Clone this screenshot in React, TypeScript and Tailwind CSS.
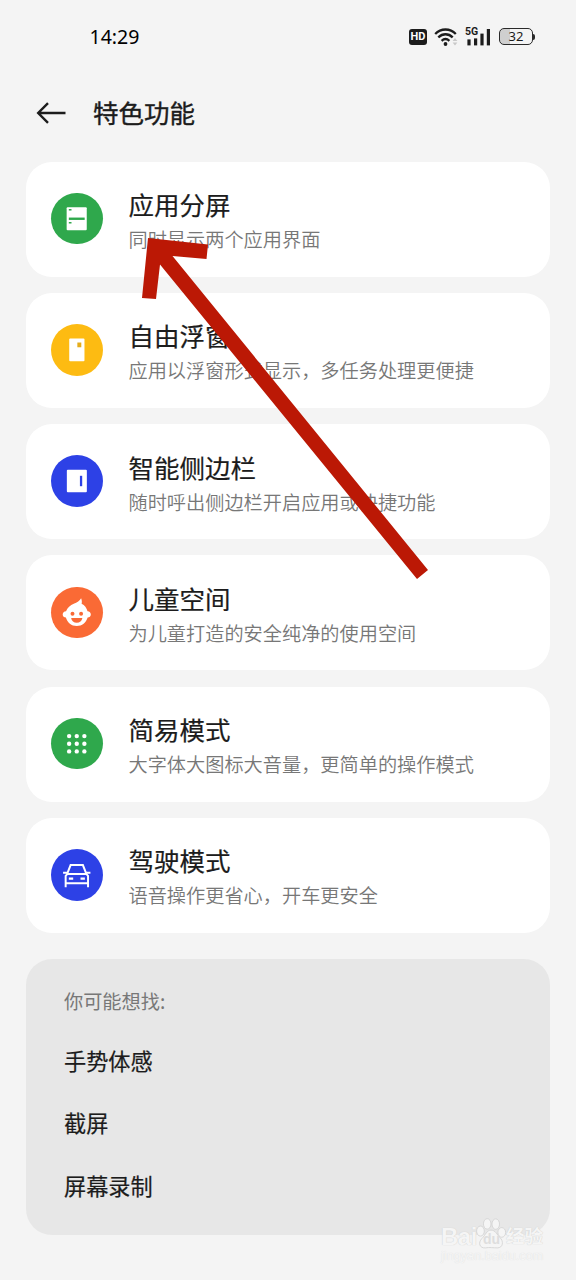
import type { ReactNode } from "react";

type Feature = {
  title: string;
  desc: string;
  color: string;
  icon: ReactNode;
};

const dots = [18.3, 26, 33.7];

const features: Feature[] = [
  {
    title: "应用分屏",
    desc: "同时显示两个应用界面",
    color: "bg-[#2fa84c]",
    icon: (
      <>
        <rect x="15.8" y="14.3" width="20.3" height="23.4" rx="1" fill="#fff" />
        <rect x="18" y="24.8" width="16" height="2.4" fill="#2fa84c" />
        <rect x="18" y="16.2" width="2.7" height="1.5" fill="#2fa84c" />
        <rect x="18" y="29.3" width="2.7" height="1.5" fill="#2fa84c" />
      </>
    ),
  },
  {
    title: "自由浮窗",
    desc: "应用以浮窗形式显示，多任务处理更便捷",
    color: "bg-[#fdbb12]",
    icon: (
      <>
        <rect x="18.4" y="14.6" width="15.4" height="23" rx="1" fill="#fff" />
        <rect x="26.6" y="18.7" width="4" height="4.8" fill="#e5ad1c" />
      </>
    ),
  },
  {
    title: "智能侧边栏",
    desc: "随时呼出侧边栏开启应用或快捷功能",
    color: "bg-[#2d41e6]",
    icon: (
      <>
        <rect x="16" y="15" width="20.2" height="22.7" rx="1" fill="#fff" />
        <rect x="29.2" y="21" width="2.3" height="10.5" fill="#2d41e6" />
      </>
    ),
  },
  {
    title: "儿童空间",
    desc: "为儿童打造的安全纯净的使用空间",
    color: "bg-[#fa6a35]",
    icon: (
      <>
        <path
          d="M15.2 24.6C16.6 20.6 19.4 18.2 23 16.8C26.4 15.6 29 14.2 30.4 11.4C31.3 13.6 31.3 15.6 30.9 17C34 18.6 36 21.2 36.9 24.6C39 24.8 40.2 26 40.2 27.8C40.2 29.6 38.8 30.8 37 30.8C35.4 36 31.4 39.4 26 39.4C20.6 39.4 16.6 36 15 30.8C13.2 30.8 11.8 29.6 11.8 27.8C11.8 26 13.1 24.8 15.2 24.6Z"
          fill="#fff"
        />
        <circle cx="21.7" cy="27.1" r="2" fill="#fa6a35" />
        <circle cx="30.4" cy="27.1" r="2" fill="#fa6a35" />
        <path d="M20.3 31.2H31.7C31.2 34.1 29 36 26 36C23 36 20.8 34.1 20.3 31.2Z" fill="#fa6a35" />
      </>
    ),
  },
  {
    title: "简易模式",
    desc: "大字体大图标大音量，更简单的操作模式",
    color: "bg-[#2fa84c]",
    icon: (
      <g fill="#fff">
        {dots.map((cy) =>
          dots.map((cx) => <circle key={`${cx}-${cy}`} cx={cx} cy={cy} r="2.2" />)
        )}
      </g>
    ),
  },
  {
    title: "驾驶模式",
    desc: "语音操作更省心，开车更安全",
    color: "bg-[#2d41e6]",
    icon: (
      <g fill="none" stroke="#fff" strokeWidth="2">
        <path d="M16.3 25.2L19.8 16.2H32.2L35.7 25.2" />
        <path d="M12.2 23.9H16.4M35.6 23.9H39.8" />
        <path d="M14.8 38.6V27.2L16.6 25.2H35.6L37.4 27.2V38.6M14.8 34.6H37.4" />
        <path d="M18 30H22.4M29.8 30H34.2" strokeWidth="2.2" />
      </g>
    ),
  },
];

const suggestions = ["手势体感", "截屏", "屏幕录制"];

const StatusBar = () => (
  <header className="flex h-[73px] items-center justify-between pr-[41px] pl-[89.5px]">
    <span className="font-['Noto_Sans','Noto_Sans_CJK_SC',sans-serif] text-[19.5px] text-black">
      14:29
    </span>
    <div className="flex items-center">
      <span className="mr-[7px] flex h-4 w-[18px] items-center justify-center rounded-[3px] bg-[#1c1c1c] font-['Roboto',sans-serif] text-[11px] leading-none font-bold text-white">
        HD
      </span>
      <svg className="mr-1.5" width="25" height="20" viewBox="0 0 25 20" fill="none">
        <g stroke="#1c1c1c" strokeWidth="2.3">
          <path d="M1.2 7C7 1 16 1 21.8 7" />
          <path d="M4.3 10.4C8.6 6.2 14.4 6.2 18.7 10.4" />
          <path d="M7.6 13.8C10 11.5 13 11.5 15.4 13.8" />
        </g>
        <circle cx="11.5" cy="17" r="1.9" fill="#1c1c1c" />
        <path d="M18.6 14L21 11L23.4 14ZM18.6 15.6H23.4L21 18.6Z" fill="#c8c8c8" />
      </svg>
      <div className="relative mr-[7px] h-5 w-[27px]">
        <svg className="block" width="27" height="20" viewBox="0 0 27 20" fill="#1c1c1c">
          <rect x="2.4" y="12.4" width="3.2" height="6" />
          <rect x="9" y="11.4" width="3.2" height="7" />
          <rect x="15.4" y="6.6" width="3.2" height="11.8" />
          <rect x="21.8" y="2" width="3.2" height="16.4" />
        </svg>
        <span className="absolute -top-px left-0 font-['Roboto',sans-serif] text-[10.5px] leading-[11px] font-bold text-[#1c1c1c]">
          5G
        </span>
      </div>
      <div className="flex items-center">
        <div className="flex h-[17px] w-[34px] items-center justify-center rounded-[5px] border-[1.5px] border-[#2a2a2a] bg-linear-to-r from-[#cfcfcf] from-32% to-transparent to-32% font-['Noto_Sans',sans-serif] text-[13px] leading-none text-[#1c1c1c]">
          32
        </div>
        <div className="h-1.5 w-0.5 rounded-r bg-[#2a2a2a]" />
      </div>
    </div>
  </header>
);

const FeatureCard = ({ title, desc, color, icon }: Feature) => (
  <li className="flex h-[115px] items-center gap-[26px] rounded-[26px] bg-white pl-[25px]">
    <div className={`mb-px size-[51.5px] shrink-0 rounded-full ${color}`}>
      <svg viewBox="0 0 52 52">{icon}</svg>
    </div>
    <div className="flex flex-col pt-0.5">
      <h2 className="text-[25.5px] leading-[38px] text-[#1c1c1c] [-webkit-text-stroke:0.2px_#1c1c1c]">
        {title}
      </h2>
      <p className="text-[19.2px] leading-8 font-[350] text-[#777]">{desc}</p>
    </div>
  </li>
);

const Watermark = () => (
  <div className="absolute top-[1217px] left-[441px] w-[106px] font-['Liberation_Sans','Noto_Sans_CJK_SC',sans-serif] font-bold text-[#f5f5f5] [text-shadow:0_0_1px_#c4c4c4]">
    <div className="flex items-end">
      <span className="w-[35px] text-[24px] leading-[25px] tracking-[-0.5px]">Bai</span>
      <div className="relative h-8 w-[30px]">
        <svg width="30" height="32" viewBox="0 0 31 32" fill="#f5f5f5" stroke="#d3d3d3" strokeWidth=".9">
          <ellipse cx="4.6" cy="14" rx="4" ry="5.2" />
          <ellipse cx="11.6" cy="6.6" rx="3.9" ry="5.4" />
          <ellipse cx="20.4" cy="6.8" rx="3.9" ry="5.4" />
          <ellipse cx="26.6" cy="15.4" rx="4" ry="5" />
          <path d="M15.5 13C20 13 21.5 17.5 24.5 20.5C29 24.5 28 31.4 22 31.4C18 31.4 14 30.6 10 31.4C3.5 32 2 26 6 21.8C10 18 11 13 15.5 13Z" />
        </svg>
        <span className="absolute top-[15px] left-[7px] text-[14px] leading-[15px] text-[#dedede] [text-shadow:none]">
          du
        </span>
      </div>
      <span className="text-[18.5px] leading-6 whitespace-nowrap">经验</span>
    </div>
    <div className="text-[12.7px] leading-[15px] font-normal [text-shadow:0_0_1px_#dadada]">
      jingyan.baidu.com
    </div>
  </div>
);

const App = () => {
  return (
    <div className="relative h-[1280px] w-[576px] overflow-hidden bg-[#f4f4f4] font-['Noto_Sans_CJK_SC',sans-serif]">
      <StatusBar />

      <div className="flex h-[88.5px] items-center gap-[26px] pb-[9px] pl-9">
        <svg width="31" height="24" viewBox="0 0 31 24" fill="none" stroke="#1c1c1c" strokeWidth="2.4">
          <path d="M29.5 12H2.5M12 2.2L2.2 12L12 21.8" />
        </svg>
        <h1 className="pb-px text-[25.5px] text-[#1c1c1c] [-webkit-text-stroke:0.4px_#1c1c1c]">
          特色功能
        </h1>
      </div>

      <ul className="flex flex-col gap-[16.25px] px-[26px]">
        {features.map((feature) => (
          <FeatureCard key={feature.title} {...feature} />
        ))}
      </ul>

      <section className="mx-[26px] mt-[26px] h-[276px] rounded-[26px] bg-[#e7e7e7] pt-[26px] pl-[38px]">
        <p className="text-[19.2px] leading-8 text-[#777]">你可能想找:</p>
        <ul className="mt-3">
          {suggestions.map((item) => (
            <li
              key={item}
              className="text-[22.2px] leading-[62.5px] text-[#1c1c1c] [-webkit-text-stroke:0.2px_#1c1c1c]">
              {item}
            </li>
          ))}
        </ul>
      </section>

      <Watermark />

      <svg className="absolute top-0 left-0" width="576" height="1280" viewBox="0 0 576 1280">
        <path d="M148 238L208 244.5L206.5 259L172.5 256L428 570L417 579L160 264.5L156 299L142 298Z" fill="#bb1805" />
      </svg>
    </div>
  );
};

export default App;
